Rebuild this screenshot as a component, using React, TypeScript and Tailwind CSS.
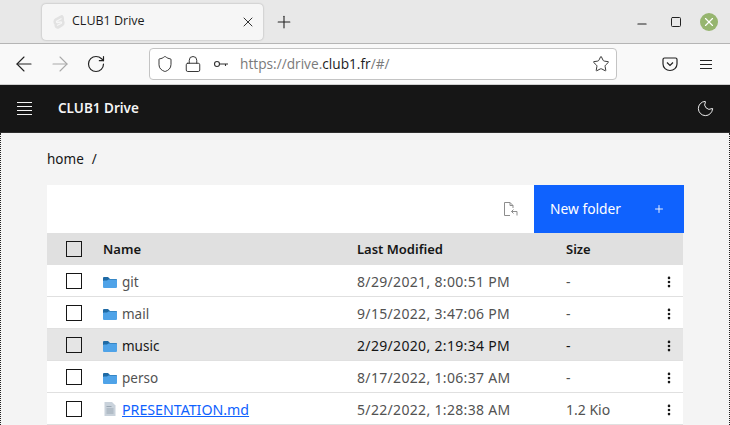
import { ArrowLeft, ArrowRight, Lock, Minus, Moon, MoreVertical, Plus, RotateCw, Shield, Square, Star, X } from 'lucide-react'

const ROWS = [
  { name: 'git', date: '8/29/2021, 8:00:51 PM', size: '-' },
  { name: 'mail', date: '9/15/2022, 3:47:06 PM', size: '-' },
  { name: 'music', date: '2/29/2020, 2:19:34 PM', size: '-', hover: true },
  { name: 'perso', date: '8/17/2022, 1:06:37 AM', size: '-' },
  { name: 'PRESENTATION.md', date: '5/22/2022, 1:28:38 AM', size: '1.2 Kio', file: true },
]

function FolderIcon() {
  return (
    <svg className="mr-[5px] mt-[2px] h-[14px] w-[14px] shrink-0" viewBox="0 0 14 14">
      <path d="M0 3a1 1 0 0 1 1-1h4l2 2h6a1 1 0 0 1 1 1v1H0z" fill="#1f6aa5" />
      <path d="M0 6.500q0-1 1-1h3l1.500-1H13a1 1 0 0 1 1 1V12a1 1 0 0 1-1 1H1a1 1 0 0 1-1-1z" fill="#4fa3e8" />
    </svg>
  )
}

function FileIcon() {
  return (
    <svg className="mr-[5px] mt-[2px] h-[14px] w-[14px] shrink-0" viewBox="0 0 14 14">
      <path d="M1.500 0H9l3.500 3.500V14h-11z" fill="#c9d2db" />
      <path d="M3.500 4.500h5M3.500 7h7M3.500 9h7M3.500 11h7" stroke="#9aa7b3" strokeWidth="1" />
    </svg>
  )
}

function Checkbox() {
  return <span className="block h-4 w-4 border border-[#161616]" />
}

function Row({ row }: { row: (typeof ROWS)[number] }) {
  return (
    <div className={`flex h-8 items-center border-b border-[#e0e0e0] text-[14px] ${row.hover ? 'bg-[#e5e5e5] text-[#161616]' : 'bg-white text-[#525252]'}`}>
      <div className="flex w-[56px] justify-center pr-[2px]">
        <Checkbox />
      </div>
      <div className="flex w-[254px] items-center">
        {row.file ? <FileIcon /> : <FolderIcon />}
        {row.file ? (
          <span className="pt-[3px] text-[14.2px] text-[#0f62fe] underline">{row.name}</span>
        ) : (
          <span className="pt-[3px] text-[13.5px]">{row.name}</span>
        )}
      </div>
      <div className="w-[209px] pt-[2px] tracking-[0.33px]">{row.date}</div>
      <div className="flex-1 pt-[2px]">{row.size}</div>
      <MoreVertical className="mr-[7px] mt-[2px] h-[14px] w-[14px] text-[#161616]" strokeWidth={2.5} />
    </div>
  )
}

export default function App() {
  return (
    <div className="flex h-[425px] w-[730px] flex-col overflow-hidden bg-white font-['Noto_Sans',sans-serif]">
      {/* Tab strip */}
      <div className="flex h-[44px] shrink-0 items-center border-b border-[#b5b5b5] bg-[#e8e8e8] font-['Open_Sans',sans-serif]">
        <div className="ml-[42px] flex h-[36px] w-[221px] items-center rounded-[4px] bg-[#f6f6f6] pl-[9px] pr-[7px] shadow-[0_0_2px_rgba(0,0,0,0.3)]">
          <svg className="h-[16px] w-[16px]" viewBox="0 0 16 16" fill="none">
            <path d="M10.500 1 4 4.500C2 6 2 9 3.500 10.500 3 13 5.500 15.500 8 14.500l4-2.500c2-1.500 2-4 1-5.500C13.500 3 12 .5 10.500 1z" fill="#e2e2e2" />
            <path d="M10.500 4.500 6 7c-1 .7-.5 1.700.5 1.500L9.500 8c1-.2 1.500.8.500 1.500L6 11.500" stroke="#f6f6f6" strokeWidth="1.300" />
          </svg>
          <span className="ml-[5px] flex-1 text-[12.5px] text-[#1c1c1c]">CLUB1 Drive</span>
          <X className="h-[16px] w-[16px] text-[#333]" strokeWidth={1.5} />
        </div>
        <Plus className="ml-[11px] h-[20px] w-[20px] text-[#222]" strokeWidth={1.3} />
        <div className="flex-1" />
        <Minus className="mr-[21px] mt-[4px] h-[14px] w-[14px] text-[#222]" strokeWidth={2} />
        <Square className="mr-[18px] h-[12px] w-[12px] text-[#222]" strokeWidth={2} />
        <div className="mr-[12px] flex h-[18px] w-[18px] items-center justify-center rounded-full bg-[#96b56f]">
          <X className="h-[14px] w-[14px] text-white" strokeWidth={2} />
        </div>
      </div>

      {/* Toolbar */}
      <div className="flex h-[40px] shrink-0 items-center bg-[#f9f9f9] font-['Open_Sans',sans-serif]">
        <ArrowLeft className="ml-[12px] h-[24px] w-[24px] text-[#222]" strokeWidth={1.1} />
        <ArrowRight className="ml-[12px] h-[24px] w-[24px] text-[#aaa]" strokeWidth={1.1} />
        <RotateCw className="ml-[14px] h-[20px] w-[20px] text-[#222]" strokeWidth={1.4} />
        <div className="ml-[43px] flex h-[32px] w-[468px] items-center rounded-[4px] border border-[#c4c4c4] bg-white pl-[6px] pr-[6px]">
          <Shield className="h-[18px] w-[18px] text-[#333]" strokeWidth={1.3} />
          <Lock className="ml-[10px] h-[18px] w-[18px] text-[#333]" strokeWidth={1.3} />
          <svg className="ml-[11px] h-[16px] w-[16px] text-[#333]" viewBox="0 0 16 16" fill="none" stroke="currentColor" strokeWidth="1.100">
            <circle cx="4" cy="8" r="2.500" />
            <path d="M6.500 8H15M12.500 8v2" />
          </svg>
          <span className="ml-[11px] flex-1 text-[13.7px] text-[#7a7a7a]">
            https://drive.<span className="text-[#1c1c1c]">club1.fr</span>/#/
          </span>
          <Star className="h-[18px] w-[18px] text-[#333]" strokeWidth={1.3} />
        </div>
        <div className="flex-1" />
        <svg className="mr-[22px] h-[16px] w-[16px] text-[#222]" viewBox="0 0 16 16" fill="none" stroke="currentColor" strokeWidth="1.200">
          <path d="M2.500 2h11A1.500 1.500 0 0 1 15 3.500V8a7 6.500 0 0 1-14 0V3.500A1.500 1.500 0 0 1 2.500 2z" />
          <path d="m5 6.500 3 3 3-3" />
        </svg>
        <div className="mr-[18px] flex w-[12px] flex-col gap-[3px]">
          <span className="h-[1px] bg-[#222]" />
          <span className="h-[1px] bg-[#222]" />
          <span className="h-[1px] bg-[#222]" />
        </div>
      </div>

      {/* Page header */}
      <div className="flex h-[49px] shrink-0 items-center justify-between border-y border-t-[#d0d0d0] border-b-[#2e2e2e] bg-[#161616] pl-[17px] pr-[15px]">
        <div className="flex items-center">
          <div className="flex w-[15px] flex-col gap-[3px]">
            <span className="h-[1px] bg-[#f4f4f4]" />
            <span className="h-[1px] bg-[#f4f4f4]" />
            <span className="h-[1px] bg-[#f4f4f4]" />
            <span className="h-[1px] bg-[#f4f4f4]" />
          </div>
          <span className="ml-[26px] text-[13.5px] font-semibold text-[#f4f4f4]">CLUB1 Drive</span>
        </div>
        <Moon className="h-[19px] w-[19px] text-[#f4f4f4]" strokeWidth={1.2} />
      </div>

      {/* Page body */}
      <div className="flex-1 border-x border-dotted border-[#222] bg-[#f4f4f4] pl-[46px] pr-[45px] pt-[18px]">
        <div className="flex h-[16px] items-center text-[13.5px] text-[#161616]">
          <span>home</span>
          <span className="ml-[8px]">/</span>
        </div>
        <div className="mt-[18px] flex h-[48px] items-stretch justify-end bg-white">
          <div className="flex w-[48px] items-center justify-center">
            <svg className="h-[16px] w-[16px] text-[#8d8d8d]" viewBox="0 0 16 16" fill="none" stroke="currentColor" strokeWidth="1">
              <path d="M8 14.500H2.500v-13H8l3 3V7M8 1.500v3h3" />
              <path d="M15 14.500v-4H9.500m2-2-2 2 2 2" />
            </svg>
          </div>
          <div className="flex w-[150px] items-center justify-between bg-[#0f62fe] pl-[16px] pr-[19px] text-[13.8px] text-white">
            <span>New folder</span>
            <Plus className="h-[12px] w-[12px]" strokeWidth={1.8} />
          </div>
        </div>
        <div className="mr-[1px]">
          <div className="flex h-[32px] items-center bg-[#e0e0e0] text-[13px] font-semibold text-[#161616]">
            <div className="flex w-[56px] justify-center pr-[2px]">
              <Checkbox />
            </div>
            <div className="w-[254px] pt-[1px]">Name</div>
            <div className="w-[209px] pt-[1px]">Last Modified</div>
            <div className="pt-[1px]">Size</div>
          </div>
          {ROWS.map((row) => (
            <Row key={row.name} row={row} />
          ))}
        </div>
      </div>
    </div>
  )
}
